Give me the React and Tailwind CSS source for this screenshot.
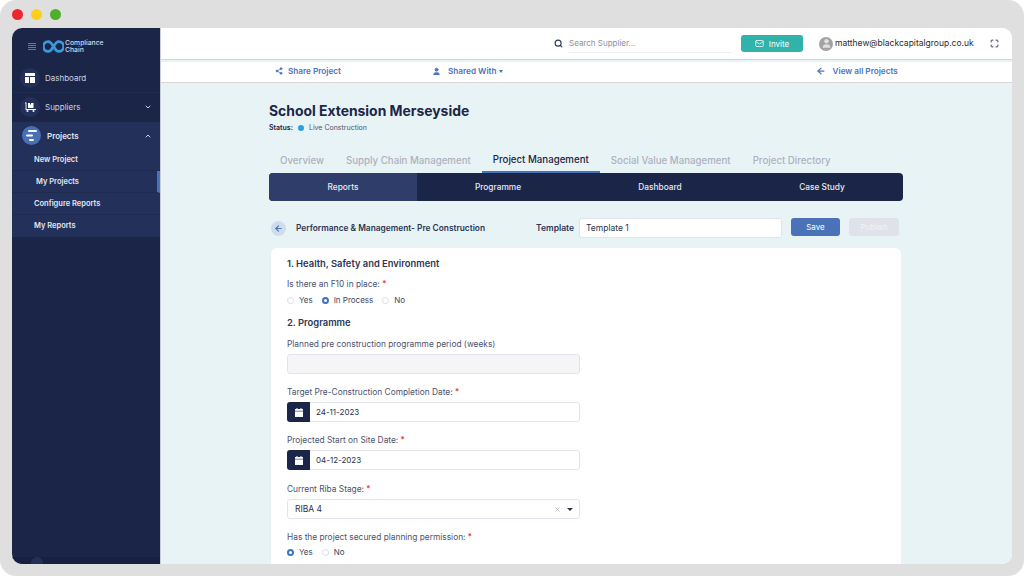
import { Search, Mail, Maximize, Share2, User, ChevronDown, ChevronUp, ArrowLeft, X } from 'lucide-react'

const tabs = ['Overview', 'Supply Chain Management', 'Project Management', 'Social Value Management', 'Project Directory']
const subTabs = ['Programme', 'Dashboard', 'Case Study']

function DashboardIcon() {
  return (
    <svg width="10" height="10" viewBox="0 0 10 10" fill="#fff">
      <rect x="0" y="0" width="10" height="3" />
      <rect x="0" y="4" width="4" height="6" />
      <rect x="5" y="4" width="5" height="6" />
    </svg>
  )
}

function SuppliersIcon() {
  return (
    <svg width="11" height="10" viewBox="0 0 11 10" fill="#fff">
      <path d="M0 .5h1.500V7H11v1H.6V1.500H0z" />
      <path d="M3 1h2v1.500h1V1h2.500v5H3z" />
      <circle cx="2.500" cy="9" r="1" />
      <circle cx="8.500" cy="9" r="1" />
    </svg>
  )
}

function ProjectsIcon() {
  return (
    <svg width="12" height="11" viewBox="0 0 12 11" fill="#fff">
      <rect x="2" y="0" width="9" height="2" rx="1" />
      <rect x="0" y="4.500" width="7" height="2" rx="1" />
      <rect x="3" y="9" width="5" height="2" rx="1" />
    </svg>
  )
}

function CalendarIcon() {
  return (
    <svg width="8" height="9" viewBox="0 0 8 9" fill="#fff">
      <rect x="1.500" y="0" width="1" height="2" />
      <rect x="5.500" y="0" width="1" height="2" />
      <rect x="0" y="1" width="8" height="1.800" />
      <rect x="0" y="3.400" width="8" height="5.600" />
    </svg>
  )
}

function Logo() {
  return (
    <svg width="21" height="13" viewBox="0 0 21 13" fill="none">
      <path d="M10.500 6.500C8.800 3.500 7.300 1.600 5.200 1.600a4.900 4.900 0 0 0 0 9.800c2.100 0 3.600-1.900 5.300-4.900z" stroke="#3a9ad9" strokeWidth="2.800" />
      <path d="M10.500 6.500c1.700-3 3.200-4.900 5.300-4.900a4.900 4.900 0 0 1 0 9.800c-2.100 0-3.600-1.900-5.300-4.900z" stroke="#3a9ad9" strokeWidth="2.800" />
    </svg>
  )
}

function Radio({ checked, label }) {
  return (
    <span className="flex items-center gap-[5px]">
      <span className={checked
        ? 'w-[7px] h-[7px] rounded-full bg-white border-2 border-[#3f73bd]'
        : 'w-[7px] h-[7px] rounded-full bg-white border border-[#dddde3]'} />
      <span className="text-[8px] text-[#3c4560]">{label}</span>
    </span>
  )
}

function Label({ children, required }) {
  return (
    <div className="text-[8.350px] leading-[12px] text-[#4a5270]">
      {children}
      {required && <span className="text-[#e02b2b]"> *</span>}
    </div>
  )
}

function DateField({ value }) {
  return (
    <div className="mt-1 flex h-[20px] w-[293px] rounded-[3px] border border-[#e2e3ef] bg-white">
      <div className="-m-px flex w-[23px] items-center justify-center rounded-l-[3px] bg-[#1b2548]">
        <CalendarIcon />
      </div>
      <div className="ml-[7px] flex items-center text-[8px] text-[#2c3347]">{value}</div>
    </div>
  )
}

export default function App() {
  return (
    <div className="h-[576px] w-[1024px] overflow-hidden bg-white font-[Inter,sans-serif]">
      <div className="flex h-[576px] flex-col rounded-[16px] bg-[#dfdfdf] px-3 pb-3">
        <div className="flex h-7 items-start gap-2 pt-[9px]">
          <span className="h-[11px] w-[11px] rounded-full bg-[#ec2530]" />
          <span className="h-[11px] w-[11px] rounded-full bg-[#fdcf1a]" />
          <span className="h-[11px] w-[11px] rounded-full bg-[#4fae2c]" />
        </div>

        <div className="flex min-h-0 flex-1 overflow-hidden rounded-[10px] bg-white">
          <aside className="flex w-[148px] shrink-0 flex-col bg-[#1b2548] text-white">
            <div className="flex h-[36px] items-center pl-4">
              <div className="flex w-[8px] flex-col gap-px">
                <span className="h-px bg-[#6d7590]" />
                <span className="h-px bg-[#6d7590]" />
                <span className="h-px bg-[#6d7590]" />
                <span className="h-px bg-[#6d7590]" />
              </div>
              <div className="ml-[7px]"><Logo /></div>
              <div className="ml-px text-[6.800px] font-medium leading-[7.500px] text-[#d5d9e6]">Compliance<br />Chain</div>
            </div>

            <div className="flex h-[29px] items-center border-b border-[#1f2a50] pl-2">
              <span className="flex h-[20px] w-[20px] items-center justify-center rounded-full bg-[#25305a]"><DashboardIcon /></span>
              <span className="ml-[5px] text-[8px] text-[#cdd2e0]">Dashboard</span>
            </div>
            <div className="flex h-[29px] items-center pb-[2px] pl-2 pr-2">
              <span className="flex h-[20px] w-[20px] items-center justify-center rounded-full bg-[#25305a]"><SuppliersIcon /></span>
              <span className="ml-[5px] flex-1 text-[8px] text-[#cdd2e0]">Suppliers</span>
              <ChevronDown size={8} color="#cdd2e0" strokeWidth={3} />
            </div>

            <div className="bg-[#22305a]">
              <div className="flex h-[27px] items-center pl-[10px] pr-2">
                <span className="flex h-[19px] w-[19px] items-center justify-center rounded-full bg-[#4770b5]"><ProjectsIcon /></span>
                <span className="ml-[6px] flex-1 text-[8px] font-semibold text-[#e4e7f0]">Projects</span>
                <ChevronUp size={8} color="#cdd2e0" strokeWidth={3} />
              </div>
              <div className="flex h-[22px] items-center border-b border-[#1f2a50] pl-[22px] text-[7.500px] font-semibold text-[#e4e7f0]">New Project</div>
              <div className="flex h-[22px] items-center border-b border-[#1f2a50] border-r-[3px] border-r-[#4a72b8] pl-[24px] text-[7.500px] font-semibold text-[#e4e7f0]">My Projects</div>
              <div className="flex h-[22px] items-center border-b border-[#1f2a50] pl-[22px] text-[7.500px] font-semibold text-[#e4e7f0]">Configure Reports</div>
              <div className="flex h-[22px] items-center pl-[22px] text-[7.500px] font-semibold text-[#e4e7f0]">My Reports</div>
            </div>

            <div className="mt-auto h-[7px] overflow-hidden bg-[#191f40] pl-[19px]">
              <div className="h-[20px] w-[12px] rounded-full bg-[#25305a]" />
            </div>
          </aside>

          <main className="flex min-w-0 flex-1 flex-col border-l border-[#c9ced6] bg-[#e8f3f6]">
            <header className="flex h-[32px] shrink-0 items-center border-b border-[#d4d6d9] bg-white">
              <Search size={9} color="#2f3a5c" strokeWidth={3} className="ml-[393px]" />
              <div className="ml-[6px] flex h-[18px] w-[163px] items-center border-b border-[#f0f0f2] text-[8px] text-[#8b8f9e]">Search Supplier...</div>
              <button className="ml-[9px] flex h-[17px] w-[62px] items-center justify-center gap-[5px] rounded-[3px] bg-[#2fb3ab] text-[8px] text-white">
                <Mail size={9} />
                Invite
              </button>
              <span className="ml-4 flex h-[14px] w-[14px] items-center justify-center overflow-hidden rounded-full bg-[#a3a3a3]">
                <User size={11} color="#e2e2e2" fill="#e2e2e2" />
              </span>
              <span className="ml-[2px] text-[8.500px] text-[#2a2a2a]">matthew@blackcapitalgroup.co.uk</span>
              <Maximize size={9} color="#2f3a5c" strokeWidth={2.500} className="ml-4" />
            </header>

            <div className="mt-[2px] flex h-[21px] shrink-0 items-center border-b border-[#d4d6d9] bg-white pb-[2px] text-[8.200px] font-semibold text-[#4a72c0]">
              <Share2 size={8} fill="#4a72c0" className="ml-[114px]" />
              <span className="ml-[5px]">Share Project</span>
              <User size={9} fill="#4a72c0" className="ml-[91px]" />
              <span className="ml-[7px]">Shared With</span>
              <span className="ml-[2px] h-0 w-0 border-x-[2.500px] border-t-[3px] border-x-transparent border-t-[#4a72c0]" />
              <ArrowLeft size={10} strokeWidth={3} className="ml-[313px]" />
              <span className="ml-[7px]">View all Projects</span>
            </div>

            <div className="min-h-0 flex-1 overflow-hidden">
              <div className="ml-[108px] w-[634px]">
                <h1 className="mt-[18px] text-[13.900px] font-bold leading-[20px] text-[#1b2548]">School Extension Merseyside</h1>
                <div className="mt-px flex h-[12px] items-center text-[7px]">
                  <span className="font-semibold text-[#1b2548]">Status:</span>
                  <span className="ml-[5px] h-[6px] w-[6px] rounded-full bg-[#2f9fdc]" />
                  <span className="ml-[5px] text-[#4a5270]">Live Construction</span>
                </div>

                <div className="mt-[18px] flex h-[21px] text-[9.700px] font-medium text-[#aeb1bf]">
                  {tabs.map(tab => (
                    <div
                      key={tab}
                      className={tab === 'Project Management'
                        ? 'flex items-center border-b-2 border-[#4a72b8] px-[11px] pb-[2px] text-[#1b2548]'
                        : 'flex items-center px-[11px] pb-[2px]'}
                    >
                      {tab}
                    </div>
                  ))}
                </div>

                <div className="grid h-[28px] grid-cols-[148px_1fr_1fr_1fr] overflow-hidden rounded-[4px] bg-[#1b2548] text-[8.300px] font-medium text-[#e8eaf2]">
                  <div className="flex items-center justify-center bg-[#2e3d69]">Reports</div>
                  {subTabs.map(tab => (
                    <div key={tab} className="flex items-center justify-center">{tab}</div>
                  ))}
                </div>

                <div className="mt-[17px] flex h-[20px] items-center pl-[2px]">
                  <span className="flex h-[15px] w-[15px] items-center justify-center rounded-full bg-[#cfdcec]">
                    <ArrowLeft size={9} color="#4a72c0" strokeWidth={3} />
                  </span>
                  <span className="ml-[10px] w-[240px] text-[8.350px] font-semibold text-[#2c3554]">Performance &amp; Management- Pre Construction</span>
                  <span className="w-[43px] text-[8.500px] font-semibold text-[#2c3554]">Template</span>
                  <div className="flex h-[20px] w-[203px] items-center rounded-[3px] border border-[#e2e3ef] bg-white pl-[6px] text-[8.500px] text-[#2c3347]">Template 1</div>
                  <button className="ml-[9px] h-[18px] w-[49px] self-start rounded-[3px] bg-[#4a72b8] text-[8px] text-white">Save</button>
                  <button className="ml-[9px] h-[18px] w-[50px] self-start rounded-[3px] bg-[#dfe2ea] text-[8px] text-[#f2f3f7]">Publish</button>
                </div>

                <section className="mx-[2px] mt-[10px] h-[400px] rounded-[6px] bg-white pl-4 pt-[9px]">
                  <h2 className="text-[9.400px] font-semibold leading-[13px] text-[#2c3554]">1. Health, Safety and Environment</h2>
                  <div className="mt-2"><Label required>Is there an F10 in place:</Label></div>
                  <div className="mt-[4px] flex h-[12px] items-center gap-[9px]">
                    <Radio label="Yes" />
                    <Radio checked label="In Process" />
                    <Radio label="No" />
                  </div>

                  <h2 className="mt-[10px] text-[9.400px] font-semibold leading-[13px] text-[#2c3554]">2. Programme</h2>
                  <div className="mt-[9px]"><Label>Planned pre construction programme period (weeks)</Label></div>
                  <div className="mt-1 h-[20px] w-[293px] rounded-[3px] border border-[#e2e3ef] bg-[#f5f4f7]" />

                  <div className="mt-[12px]"><Label required>Target Pre-Construction Completion Date:</Label></div>
                  <DateField value="24-11-2023" />

                  <div className="mt-[12px]"><Label required>Projected Start on Site Date:</Label></div>
                  <DateField value="04-12-2023" />

                  <div className="mt-[13px]"><Label required>Current Riba Stage:</Label></div>
                  <div className="mt-[4px] flex h-[20px] w-[293px] items-center rounded-[3px] border border-[#e2e3ef] bg-white pl-[7px] pr-[6px] text-[8.500px] text-[#2c3347]">
                    <span className="flex-1">RIBA 4</span>
                    <X size={7} color="#8b8f9e" />
                    <span className="ml-[6px] h-0 w-0 border-x-[3px] border-t-[3px] border-x-transparent border-t-[#2c3347]" />
                  </div>

                  <div className="mt-[12px]"><Label required>Has the project secured planning permission:</Label></div>
                  <div className="mt-[3px] flex h-[12px] items-center gap-[9px]">
                    <Radio checked label="Yes" />
                    <Radio label="No" />
                  </div>
                </section>
              </div>
            </div>
          </main>
        </div>
      </div>
    </div>
  )
}
